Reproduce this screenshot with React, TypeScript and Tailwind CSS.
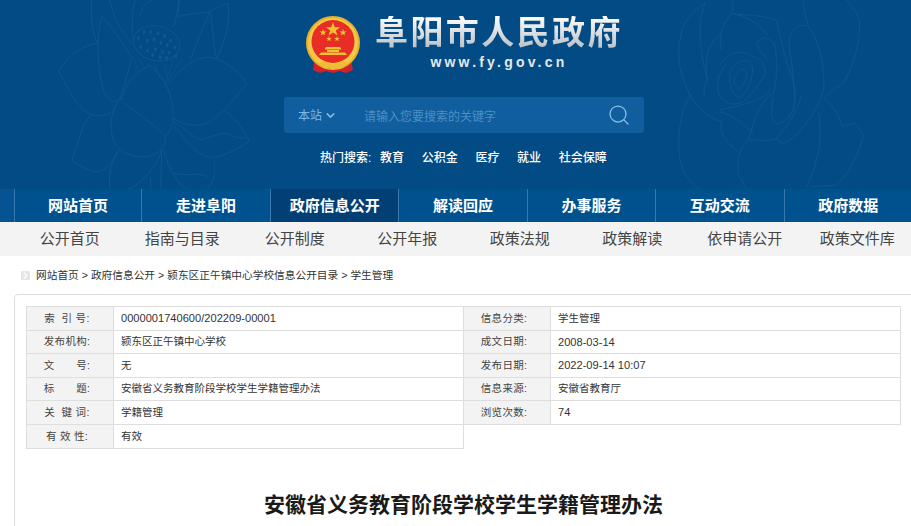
import { ChevronDown, Search } from "lucide-react";

const navItems = [
  { name: "网站首页", w: "w-[127px]" },
  { name: "走进阜阳", w: "w-[129px]" },
  { name: "政府信息公开", w: "w-[128.4px]" },
  { name: "解读回应", w: "w-[128.4px]" },
  { name: "办事服务", w: "w-[128.4px]" },
  { name: "互动交流", w: "w-[128.4px]" },
  { name: "政府数据", w: "w-[128.4px]" },
];
const subNavItems = ["公开首页", "指南与目录", "公开制度", "公开年报", "政策法规", "政策解读", "依申请公开", "政策文件库"];
const hotWords = ["教育", "公积金", "医疗", "就业", "社会保障"];

const leftRows = [
  { label: "索  引 号:", value: "0000001740600/202209-00001", h: "h-[23px]", latin: true },
  { label: "发布机构:", value: "颍东区正午镇中心学校", h: "h-[23px]" },
  { label: "文　　号:", value: "无", h: "h-[24px]" },
  { label: "标　　题:", value: "安徽省义务教育阶段学校学生学籍管理办法", h: "h-[23px]" },
  { label: "关  键 词:", value: "学籍管理", h: "h-[24px]" },
  { label: "有 效 性:", value: "有效", h: "h-[24px]" },
];

const rightRows = [
  { label: "信息分类:", value: "学生管理", h: "h-[23px]" },
  { label: "成文日期:", value: "2008-03-14", h: "h-[23px]", latin: true },
  { label: "发布日期:", value: "2022-09-14 10:07", h: "h-[24px]", latin: true },
  { label: "信息来源:", value: "安徽省教育厅", h: "h-[23px]" },
  { label: "浏览次数:", value: "74", h: "h-[24px]", latin: true },
];

const lotusSeeds = [
  [432, 96], [452, 96], [474, 100], [494, 108], [512, 122], [415, 114], [442, 122], [462, 118], [483, 128],
  [502, 135], [524, 142], [422, 142], [442, 152], [466, 148], [488, 156], [508, 158], [528, 168], [458, 166], [480, 172], [500, 174],
];

function Lotus() {
  return (
    <svg className="absolute left-0 top-0 h-[190px] w-[300px]" viewBox="0 0 900 570" fill="none" stroke="#0e578e" strokeWidth="3">
      <path d="M290 130C250 135 205 165 176 213C200 260 240 340 280 345C310 350 335 345 345 322" />
      <path d="M305 50C290 100 290 200 310 270C320 300 345 320 362 290C375 250 385 215 395 175C370 130 330 70 305 50Z" />
      <path d="M275 0C270 60 280 110 295 135M330 0C335 40 360 90 395 130M405 0C395 50 395 90 400 120M420 50C425 20 440 5 460 0" />
      <path d="M365 300C375 240 420 210 450 195C490 230 520 280 520 350C520 380 505 400 495 410" />
      <path d="M365 290C330 330 325 390 345 430C365 465 420 480 460 465C490 450 500 430 495 410C480 390 430 350 372 310" />
      <path d="M505 250C540 210 580 170 630 172C680 180 720 220 740 250C710 290 670 340 630 365C590 385 550 375 520 355" />
      <path d="M675 332C710 360 735 395 748 425C710 445 660 480 620 470C580 455 550 410 520 375" />
      <path d="M520 365C560 385 580 420 610 418C650 405 680 390 700 410L735 415" />
      <path d="M275 345C240 370 235 440 215 482C240 495 270 520 300 515C320 510 340 480 355 452" />
      <path d="M355 452C330 490 325 530 330 570M485 450C470 500 430 550 380 570M485 450L482 570M490 450C510 510 530 550 560 570" />
      <path d="M640 475C650 510 645 540 620 570M520 520C560 530 590 515 625 530M452 530V570" />
      <path d="M535 50V0M535 50C570 40 610 40 630 35C600 100 580 160 570 180M630 35C640 80 640 140 650 175C680 120 690 60 685 10C660 15 640 30 630 35" />
      <path d="M540 0C530 30 530 60 520 80" />
      <ellipse cx="470" cy="130" rx="70" ry="52" transform="rotate(12 470 130)" />
      <path d="M400 170L420 225M420 180L440 215M440 190L455 210M465 195L480 235M490 190L505 240M520 180L500 235M545 180L495 250" strokeWidth="2" />
      {lotusSeeds.map(([cx, cy]) => (
        <ellipse key={`${cx}-${cy}`} cx={cx} cy={cy} rx="4" ry="6" fill="#105a92" stroke="none" />
      ))}
    </svg>
  );
}

function Rose() {
  return (
    <svg className="absolute left-[620px] top-0 h-[190px] w-[291px]" viewBox="0 0 873 570" fill="none" stroke="#0e578e" strokeWidth="3">
      <path d="M255 10C220 30 185 70 182 110C170 170 175 210 210 285C180 340 170 410 180 480C190 530 220 550 240 570" />
      <path d="M210 285C230 325 270 355 305 365M255 10C235 60 235 140 262 240C250 265 250 280 255 290" />
      <path d="M340 0C338 20 338 35 335 40C370 45 420 70 440 105M335 40C310 70 295 100 303 150M305 100C270 120 250 170 262 240" />
      <path d="M335 40C380 50 410 40 470 60C480 110 490 150 500 190C525 240 530 290 520 320" />
      <path d="M550 0C550 30 560 60 565 80C530 65 505 90 508 140C515 190 520 230 525 290C525 330 510 360 475 370C455 375 450 340 460 290" />
      <path d="M565 80C590 110 610 170 612 250C610 300 570 370 510 420C490 435 475 430 470 415C500 380 530 340 545 285" />
      <path d="M680 0C700 25 720 50 718 70C720 130 700 200 670 250C650 265 630 270 612 295C640 320 660 350 665 378L705 370C720 385 730 410 730 410C715 460 690 520 650 555L570 560" />
      <path d="M595 335C610 420 590 500 560 560M460 280C420 300 400 370 385 420C360 440 350 480 355 520C365 540 375 560 380 570M385 420C420 420 440 425 470 415" />
      <path d="M305 365C295 400 320 430 360 460M300 335C340 345 380 380 400 400M300 330C350 320 420 305 450 275" />
      <path d="M300 195C330 150 370 150 400 170C430 180 440 210 435 225C410 260 390 290 370 305C340 320 310 310 295 280C290 250 295 220 320 190" />
      <path d="M330 215C350 180 380 170 395 195C405 220 385 270 365 290C345 300 325 270 330 215Z" />
      <path d="M345 230C360 200 380 205 380 225C375 250 365 265 355 265C345 260 340 245 345 230Z" />
      <path d="M410 130C420 110 450 110 465 135C470 180 475 230 460 280M410 130C415 150 430 165 440 175" />
    </svg>
  );
}

function Emblem() {
  return (
    <svg className="h-[58px] w-[54px] shrink-0" viewBox="0 0 54 58">
      <path d="M10 38L7 54L14 57L20 55L27 57L34 55L40 57L47 54L44 38Z" fill="#d3232a" />
      <circle cx="27" cy="27" r="27" fill="#e8b02c" />
      <circle cx="27" cy="27" r="25" fill="#f4c945" />
      <circle cx="27" cy="25.5" r="21.5" fill="#e72d26" />
      <polygon points="27,6 28.8,11.2 34.2,11.2 29.8,14.4 31.5,19.6 27,16.4 22.5,19.6 24.2,14.4 19.8,11.2 25.2,11.2" fill="#f1c232" />
      <polygon points="17,13 17.9,15.5 20.5,15.5 18.4,17 19.2,19.5 17,18 14.8,19.5 15.6,17 13.5,15.5 16.1,15.5" fill="#f1c232" />
      <polygon points="37,13 37.9,15.5 40.5,15.5 38.4,17 39.2,19.5 37,18 34.8,19.5 35.6,17 33.5,15.5 36.1,15.5" fill="#f1c232" />
      <polygon points="23,20 23.7,22 25.8,22 24.1,23.2 24.8,25.2 23,24 21.2,25.2 21.9,23.2 20.2,22 22.3,22" fill="#f1c232" />
      <polygon points="31,20 31.7,22 33.8,22 32.1,23.2 32.8,25.2 31,24 29.2,25.2 29.9,23.2 28.2,22 30.3,22" fill="#f1c232" />
      <path d="M20 31H34L35.5 33.5H18.5ZM21 34H33V36H21ZM15 36.5H39L41 39H13Z" fill="#f1c232" />
      <path d="M6 38C11 47 19 50 27 50C35 50 43 47 48 38L45 44C39 49 33 51 27 51C21 51 15 49 9 44Z" fill="#f4c945" />
      <path d="M13 47C18 44 22 46 27 49C32 46 36 44 41 47L37 50L35 53L31 51L27 54L23 51L19 53L17 50Z" fill="#eebc35" />
    </svg>
  );
}

function InfoTable({ rows, left }: { rows: typeof leftRows; left?: boolean }) {
  return (
    <div className={left ? "w-[438px] border border-[#dedede]" : "w-[437px] self-start border border-l-0 border-[#dedede]"}>
      {rows.map((row, i) => (
        <div key={row.label} className={`flex ${row.h} ${i > 0 ? "border-t border-[#dedede]" : ""}`}>
          <div className="flex w-[87px] shrink-0 items-center justify-center whitespace-pre border-r border-[#dedede] bg-[#f3f3f3] pr-[6px] text-[10.5px] tracking-[0.3px] text-[#444]">
            {row.label}
          </div>
          <div className={`flex items-center pl-[7px] text-[#333] ${row.latin ? "text-[11.1px]" : "text-[10.5px]"}`}>{row.value}</div>
        </div>
      ))}
    </div>
  );
}

export default function App() {
  return (
    <div className="relative h-[526px] w-[911px] overflow-hidden bg-white font-['Liberation_Sans','Noto_Sans_CJK_SC',sans-serif]">
      <header className="relative h-[189px] overflow-hidden bg-[#024b84]">
        <Lotus />
        <Rose />
        <div className="relative flex flex-col">
          <div className="flex pl-[306px] pt-[16px]">
            <Emblem />
            <div className="ml-[15px] flex flex-col items-center">
              <h1 className="bg-gradient-to-b from-white to-[#b9c0c6] bg-clip-text text-[33px] leading-[33px] font-bold tracking-[2.4px] text-transparent">
                阜阳市人民政府
              </h1>
              <div className="mt-[5px] text-[14px] leading-[16px] font-bold tracking-[3.2px] text-[#e4e8ec]">www.fy.gov.cn</div>
            </div>
          </div>
          <div className="ml-[284px] mt-[23px] flex h-[36px] w-[360px] items-center rounded-[3px] bg-[#115e9e] pl-[14px]">
            <span className="pt-[1px] text-[12px] text-[#78b9ec]">本站</span>
            <ChevronDown className="ml-[2px] h-[13px] w-[13px] text-[#78b9ec]" strokeWidth={3} />
            <span className="ml-[27px] pt-[3px] text-[12px] text-[#4b8fc8]">请输入您要搜索的关键字</span>
            <Search className="ml-auto mr-[13px] h-[24px] w-[24px] text-[#8cc0ea]" strokeWidth={1.25} />
          </div>
          <div className="ml-[320px] mt-[17px] flex text-[12px] leading-[17px] font-medium text-white">
            <span className="w-[60px]">热门搜索:</span>
            <div className="flex gap-[17.7px]">
              {hotWords.map((w) => (
                <span key={w}>{w}</span>
              ))}
            </div>
          </div>
        </div>
      </header>

      <nav className="flex h-[33px] bg-[#055392] pl-[14px]">
        {navItems.map((item) => (
          <a
            key={item.name}
            className={`flex h-[33px] shrink-0 items-center justify-center border-l border-[#3a78ab] pt-[1px] text-[15px] font-bold text-white ${item.w} ${item.name === "政府信息公开" ? "bg-[#023f74]" : "bg-[#00528f]"}`}
          >
            {item.name}
          </a>
        ))}
      </nav>

      <div className="flex h-[34px] bg-[#f3f3f3] pl-[13.5px]">
        {subNavItems.map((item) => (
          <a key={item} className="flex w-[112.5px] shrink-0 items-center justify-center whitespace-nowrap text-[15px] text-[#444]">
            {item}
          </a>
        ))}
      </div>

      <div className="flex h-[38px] items-center pl-[21px] pt-[1px] text-[10.7px] text-[#333]">
        <svg className="mr-[6px] h-[9px] w-[9px] shrink-0" viewBox="0 0 9 9" fill="#e6e6e6">
          <rect width="9" height="9" rx="1" />
          <path d="M3 1.5L6 4.5L3 7.5" fill="none" stroke="#fff" strokeWidth="1.2" />
        </svg>
        网站首页 &gt; 政府信息公开 &gt; 颍东区正午镇中心学校信息公开目录 &gt; 学生管理
      </div>

      <main className="ml-[14px] h-[300px] w-[920px] rounded-tl-[4px] border border-[#dedede] pl-[11px] pt-[11px]">
        <div className="flex">
          <InfoTable rows={leftRows} left />
          <InfoTable rows={rightRows} />
        </div>
        <h2 className="mt-[42px] w-[875px] text-center text-[21px] leading-[28px] font-bold text-[#1a1a1a]">
          安徽省义务教育阶段学校学生学籍管理办法
        </h2>
      </main>
    </div>
  );
}
